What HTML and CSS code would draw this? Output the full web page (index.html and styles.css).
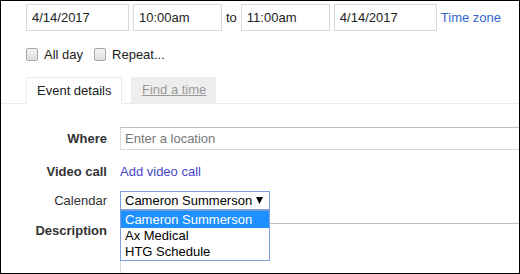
FILE: index.html
```html
<!DOCTYPE html>
<html lang="en">
<head>
  <meta charset="UTF-8" />
  <title>Event</title>
  <link rel="stylesheet" href="styles.css">
</head>
<body>
  <div class="frame">

    <!-- Date / time -->
    <div class="when">
      <input class="field date" type="text" value="4/14/2017">
      <input class="field time" type="text" value="10:00am">
      <span class="to">to</span>
      <input class="field time" type="text" value="11:00am">
      <input class="field date" type="text" value="4/14/2017">
      <a class="link" href="#">Time zone</a>
    </div>

    <!-- Options -->
    <div class="options">
      <label class="check"><span class="box"></span>All day</label>
      <label class="check"><span class="box"></span>Repeat...</label>
    </div>

    <!-- Tabs -->
    <div class="tabs">
      <div class="tab active">Event details</div>
      <div class="tab"><a href="#">Find a time</a></div>
    </div>

    <!-- Details -->
    <div class="details">
      <div class="row row-where">
        <div class="label bold">Where</div>
        <input class="where" type="text" placeholder="Enter a location">
      </div>
      <div class="row row-video">
        <div class="label bold">Video call</div>
        <a class="link video" href="#">Add video call</a>
      </div>
      <div class="row row-calendar">
        <div class="label">Calendar</div>
        <div class="select">
          <span>Cameron Summerson</span>
          <svg width="7" height="7" viewBox="0 0 7 7"><path d="M0 0H7L3.5 7Z" fill="#000"/></svg>
          <ul class="menu">
            <li class="selected">Cameron Summerson</li>
            <li>Ax Medical</li>
            <li>HTG Schedule</li>
          </ul>
        </div>
      </div>
      <div class="row row-desc">
        <div class="label bold">Description</div>
        <div class="desc"></div>
      </div>
    </div>

  </div>
</body>
</html>
```

FILE: styles.css
```css
/* General */
body {
  margin: 0;
  font-family: "Liberation Sans", Arial, sans-serif;
  font-size: 13px;
  color: #222;
  background: #fff;
}

.frame {
  width: 520px;
  height: 274px;
  box-sizing: border-box;
  border: 1px solid #000;
  overflow: hidden;
}

a.link {
  color: #3366cc;
  text-decoration: none;
}

/* Date / time row */
.when {
  display: flex;
  align-items: center;
  gap: 4px;
  padding: 3px 0 0 25px;
}
.field {
  box-sizing: border-box;
  height: 27px;
  border: 1px solid #d9d9d9;
  padding: 0 5px;
  font-family: inherit;
  font-size: 13px;
  color: #222;
  outline: none;
  flex-shrink: 0;
}
.field.date { width: 103px; }
.field.time { width: 89px; }
.to { color: #222; }

/* Checkboxes */
.options {
  display: flex;
  align-items: center;
  margin-top: 17px;
  padding-left: 25px;
  height: 13px;
}
.check {
  display: flex;
  align-items: center;
  margin-right: 11px;
}
.box {
  box-sizing: border-box;
  width: 12px;
  height: 13px;
  border: 1px solid #a6a6a6;
  border-radius: 2px;
  background: linear-gradient(#f4f4f4, #dedede);
  margin-right: 6px;
}

/* Tabs */
.tabs {
  display: flex;
  align-items: flex-end;
  margin-top: 16px;
  padding-left: 25px;
  border-bottom: 1px solid #ebebeb;
  height: 26px;
}
.tab {
  box-sizing: border-box;
  height: 26px;
  line-height: 26px;
  background: #eee;
  padding-left: 11px;
  margin-left: 9px;
  width: 85px;
  white-space: nowrap;
}
.tab a {
  color: #999;
  text-decoration: underline;
}
.tab.active {
  width: 96px;
  height: 27px;
  margin: 0 0 -1px;
  padding-left: 10px;
  background: #fff;
  border: 1px solid #ebebeb;
  border-bottom: none;
  line-height: 25px;
}

/* Details */
.details {
  padding-top: 23px;
}
.row {
  display: flex;
  align-items: center;
}
.label {
  flex-shrink: 0;
  width: 106px;
  margin-right: 13px;
  text-align: right;
  color: #333;
}
.label.bold {
  font-weight: bold;
}
.row-where { height: 23px; }
.where {
  flex-shrink: 0;
  box-sizing: border-box;
  width: 420px;
  height: 23px;
  border: 1px solid #d9d9d9;
  border-top-color: #c0c0c0;
  padding: 0 4px;
  font-family: inherit;
  font-size: 13px;
  outline: none;
}
.where::placeholder { color: #777; }

.row-video {
  height: 20px;
  margin-top: 11px;
}
.link.video { color: #4646c8; }

.row-calendar {
  height: 19px;
  margin-top: 10px;
  position: relative;
  z-index: 2;
}
.select {
  position: relative;
  flex-shrink: 0;
  box-sizing: border-box;
  width: 150px;
  height: 19px;
  border: 1px solid #7a9fdc;
  padding: 0 6px 0 4px;
  display: flex;
  align-items: center;
  justify-content: space-between;
  color: #000;
}
.menu {
  position: absolute;
  top: 18px;
  left: -1px;
  width: 150px;
  box-sizing: border-box;
  margin: 0;
  padding: 0;
  list-style: none;
  background: #fff;
  border: 1px solid #7a9fdc;
}
.menu li {
  height: 16px;
  line-height: 16px;
  padding-left: 4px;
  color: #000;
}
.menu li.selected {
  height: 17px;
  line-height: 18px;
  background: #1e90ff;
  color: #fff;
}

.row-desc {
  align-items: flex-start;
  margin-top: 13px;
}
.row-desc .label {
  line-height: 16px;
}
.desc {
  flex-shrink: 0;
  box-sizing: border-box;
  width: 420px;
  height: 80px;
  border: 1px solid #d9d9d9;
  border-top-color: #c0c0c0;
}
```
